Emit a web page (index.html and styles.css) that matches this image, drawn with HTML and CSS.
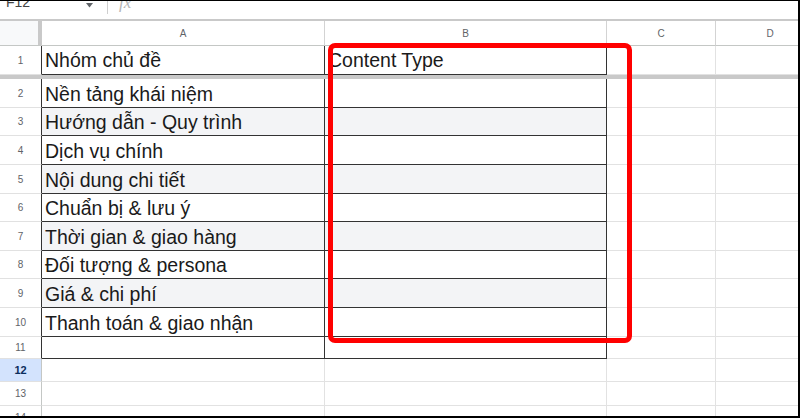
FILE: index.html
```html
<!DOCTYPE html>
<html lang="vi">
<head>
<meta charset="utf-8">
<title>Sheet</title>
<link rel="stylesheet" href="styles.css">
</head>
<body>
<div class="frame">
  <div class="fbar">
    <div class="namebox">F12</div>
    <svg class="dd" width="7" height="5" viewBox="0 0 7 5"><path d="M0 0 L7 0 L3.5 4.5 Z" fill="#5f6368"/></svg>
    <div class="fsep"></div>
    <div class="fx">fx</div>
  </div>
  <div class="topline"></div>

  <div class="row hdr">
    <div class="corner"></div>
    <div class="ch">A</div>
    <div class="ch">B</div>
    <div class="ch">C</div>
    <div class="ch">D</div>
  </div>

  <div class="row r29">
    <div class="rh tb">1</div>
    <div class="c t txt first">Nhóm chủ đề</div>
    <div class="c t txt first">Content Type</div>
    <div class="c"></div>
    <div class="c"></div>
  </div>
  <div class="band"></div>

  <div class="row r29">
    <div class="rh tb">2</div>
    <div class="c t txt">Nền tảng khái niệm</div>
    <div class="c t"></div>
    <div class="c"></div>
    <div class="c"></div>
  </div>
  <div class="row r28">
    <div class="rh tb">3</div>
    <div class="c t alt txt">Hướng dẫn - Quy trình</div>
    <div class="c t alt"></div>
    <div class="c"></div>
    <div class="c"></div>
  </div>
  <div class="row r29">
    <div class="rh tb">4</div>
    <div class="c t txt">Dịch vụ chính</div>
    <div class="c t"></div>
    <div class="c"></div>
    <div class="c"></div>
  </div>
  <div class="row r29">
    <div class="rh tb">5</div>
    <div class="c t alt txt">Nội dung chi tiết</div>
    <div class="c t alt"></div>
    <div class="c"></div>
    <div class="c"></div>
  </div>
  <div class="row r28">
    <div class="rh tb">6</div>
    <div class="c t txt">Chuẩn bị &amp; lưu ý</div>
    <div class="c t"></div>
    <div class="c"></div>
    <div class="c"></div>
  </div>
  <div class="row r29">
    <div class="rh tb">7</div>
    <div class="c t alt txt">Thời gian &amp; giao hàng</div>
    <div class="c t alt"></div>
    <div class="c"></div>
    <div class="c"></div>
  </div>
  <div class="row r28">
    <div class="rh tb">8</div>
    <div class="c t txt">Đối tượng &amp; persona</div>
    <div class="c t"></div>
    <div class="c"></div>
    <div class="c"></div>
  </div>
  <div class="row r29">
    <div class="rh tb">9</div>
    <div class="c t alt txt">Giá &amp; chi phí</div>
    <div class="c t alt"></div>
    <div class="c"></div>
    <div class="c"></div>
  </div>
  <div class="row r29">
    <div class="rh tb">10</div>
    <div class="c t txt">Thanh toán &amp; giao nhận</div>
    <div class="c t"></div>
    <div class="c"></div>
    <div class="c"></div>
  </div>
  <div class="row r22">
    <div class="rh tb">11</div>
    <div class="c t"></div>
    <div class="c t"></div>
    <div class="c"></div>
    <div class="c"></div>
  </div>
  <div class="row r23">
    <div class="rh sel">12</div>
    <div class="c"></div>
    <div class="c"></div>
    <div class="c"></div>
    <div class="c"></div>
  </div>
  <div class="row r24">
    <div class="rh">13</div>
    <div class="c"></div>
    <div class="c"></div>
    <div class="c"></div>
    <div class="c"></div>
  </div>
  <div class="row r23">
    <div class="rh">14</div>
    <div class="c"></div>
    <div class="c"></div>
    <div class="c"></div>
    <div class="c"></div>
  </div>

  <div class="highlight"></div>
</div>
</body>
</html>
```

FILE: styles.css
```css
* { box-sizing: border-box; }
html, body { margin: 0; padding: 0; background: #fff; }
body { font-family: "Liberation Sans", Arial, sans-serif; }

.frame {
  position: relative;
  width: 800px;
  height: 418px;
  overflow: hidden;
  border-top: 1px solid #000;
  border-right: 2px solid #000;
  border-bottom: 2px solid #000;
  background: #fff;
}

.fbar {
  height: 18px;
  display: flex;
  align-items: flex-start;
  overflow: hidden;
}
.namebox {
  margin-left: 6px;
  margin-top: -6px;
  width: 74px;
  font-size: 14px;
  line-height: 14px;
  color: #444;
}
.dd { margin-top: 2px; margin-left: 6px; }
.fsep {
  margin-left: 14px;
  width: 1px;
  height: 13px;
  background: #cfcfcf;
}
.fx {
  margin-left: 11px;
  margin-top: -5px;
  font-family: "Liberation Serif", serif;
  font-style: italic;
  font-size: 17px;
  line-height: 14px;
  color: #b5b5b5;
}
.topline { height: 2px; background: #c9c9c9; }

.row {
  display: grid;
  grid-template-columns: 42px 283px 282px 109px 109px;
}
.hdr { height: 25px; }
.r29 { height: 29px; }
.r28 { height: 28px; }
.r24 { height: 24px; }
.r23 { height: 23px; }
.r22 { height: 22px; }

.corner {
  background: #f8f9fa;
  border-right: 4px solid #c9c9c9;
  border-bottom: 1px solid #c4c7c5;
}
.ch {
  border-right: 1px solid #d3d3d3;
  border-bottom: 1px solid #c4c7c5;
  font-size: 10px;
  color: #5f6368;
  display: flex;
  align-items: center;
  justify-content: center;
}

.rh {
  border-right: 1px solid #c4c7c5;
  border-bottom: 1px solid #e1e1e1;
  font-size: 10px;
  color: #5f6368;
  display: flex;
  align-items: center;
  justify-content: center;
}
.rh.tb { border-right-color: #333; }
.rh.sel {
  background: #d3e3fd;
  color: #0b2e5c;
  font-weight: bold;
  font-size: 11px;
}

.c {
  border-right: 1px solid #e2e2e2;
  border-bottom: 1px solid #e2e2e2;
}
.c.t {
  border-right-color: #333;
  border-bottom-color: #333;
}
.c.alt { background: #f3f4f6; }

.txt {
  display: flex;
  align-items: flex-end;
  padding-left: 3px;
  padding-bottom: 2px;
  font-size: 19.5px;
  line-height: 22px;
  color: #1a1a1a;
  white-space: nowrap;
  overflow: hidden;
}
.txt.first { padding-bottom: 3px; }

.band { height: 4px; background: #c9c9c9; }

.highlight {
  position: absolute;
  left: 328px;
  top: 42px;
  width: 304px;
  height: 300px;
  border: 5px solid #ff0000;
  border-radius: 7px;
}
```
